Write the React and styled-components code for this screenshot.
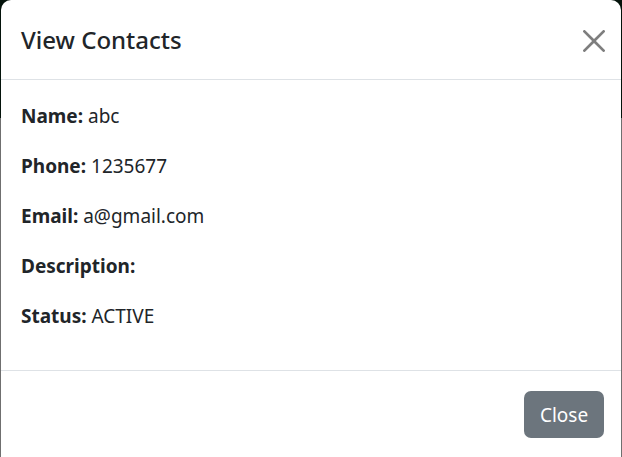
import React from "react";
import styled, { createGlobalStyle } from "styled-components";

const Global = createGlobalStyle`
  html, body { margin: 0; padding: 0; }
  body {
    width: 622px;
    height: 457px;
    overflow: hidden;
    background: linear-gradient(to bottom, #04130b 0, #04130b 118px, #6f6f6f 118px, #6f6f6f 100%);
    font-family: "Noto Sans", "Open Sans", sans-serif;
    color: #212529;
  }
`;

const Modal = styled.div`
  margin-left: 1px;
  width: 620px;
  height: 470px;
  box-sizing: border-box;
  background: #fff;
  border-radius: 10px;
  display: flex;
  flex-direction: column;
`;

const Header = styled.div`
  display: flex;
  align-items: center;
  padding: 20px;
  height: 80px;
  box-sizing: border-box;
  border-bottom: 1px solid #dee2e6;
`;

const Title = styled.h5`
  margin: 0;
  font-size: 24px;
  font-weight: 500;
  line-height: 36px;
`;

const CloseX = styled.button`
  margin: 2px -9px 0 auto;
  width: 32px;
  height: 32px;
  padding: 5px;
  border: 0;
  background: transparent;
  opacity: 0.5;
  display: flex;
  align-items: center;
  justify-content: center;
  cursor: pointer;
`;

const Body = styled.div`
  padding: 21px 20px 20px;
  height: 291px;
  box-sizing: border-box;
  border-bottom: 1px solid #dee2e6;
`;

const Line = styled.p`
  margin: 0 0 20px;
  font-size: 19px;
  line-height: 30px;
`;

const Label = styled.strong`
  font-weight: 700;
`;

const Footer = styled.div`
  display: flex;
  justify-content: flex-end;
  padding: 20px 17px 20px;
`;

const Button = styled.button`
  width: 80px;
  height: 47px;
  border: 0;
  border-radius: 7px;
  background: #6c757d;
  color: #fff;
  font-family: inherit;
  font-size: 19px;
  line-height: 30px;
  padding: 0;
`;

const rows = [
  ["Name:", "abc"],
  ["Phone:", "1235677"],
  ["Email:", "a@gmail.com"],
  ["Description:", ""],
  ["Status:", "ACTIVE"],
];

export default function App() {
  return (
    <>
      <Global />
      <Modal>
        <Header>
          <Title>View Contacts</Title>
          <CloseX aria-label="Close">
            <svg width="22" height="22" viewBox="0 0 16 16" fill="#000">
              <path d="M.293.293a1 1 0 0 1 1.414 0L8 6.586 14.293.293a1 1 0 1 1 1.414 1.414L9.414 8l6.293 6.293a1 1 0 0 1-1.414 1.414L8 9.414l-6.293 6.293a1 1 0 0 1-1.414-1.414L6.586 8 .293 1.707a1 1 0 0 1 0-1.414z" />
            </svg>
          </CloseX>
        </Header>
        <Body>
          {rows.map(([k, v]) => (
            <Line key={k}>
              <Label>{k}</Label> {v}
            </Line>
          ))}
        </Body>
        <Footer>
          <Button>Close</Button>
        </Footer>
      </Modal>
    </>
  );
}
